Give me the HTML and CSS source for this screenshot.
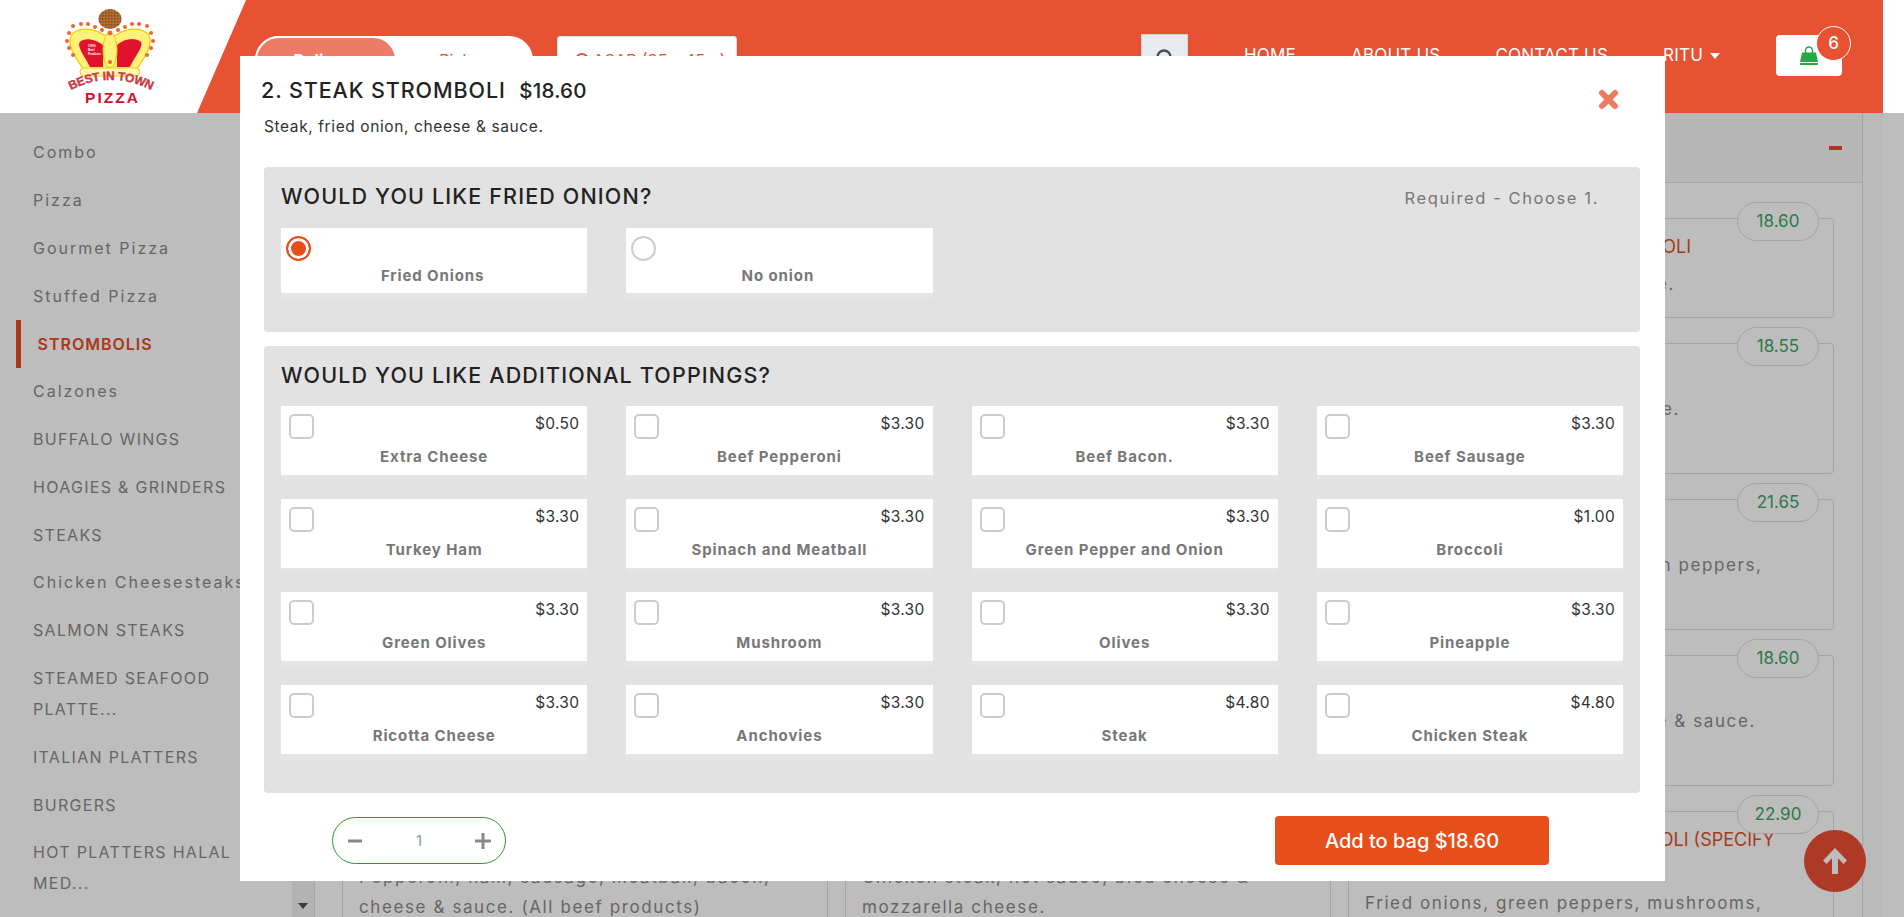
FILE: index.html
```html
<!DOCTYPE html>
<html lang="en">
<head>
<meta charset="UTF-8" />
<title>Best In Town Pizza</title>
<link rel="stylesheet" href="styles.css">
</head>
<body>
    <header class="topbar">
        <a class="logo">
            <svg width="246" height="113" viewBox="0 0 246 113">
                <defs>
                    <pattern id="crumb" width="3" height="3" patternUnits="userSpaceOnUse">
                        <rect width="3" height="3" fill="#a9642c"/>
                        <circle cx="0.8" cy="0.8" r="0.6" fill="#6f3a14"/>
                        <circle cx="2.2" cy="2.2" r="0.5" fill="#d99a55"/>
                    </pattern>
                    <path id="arc" d="M71 90 Q110 70 151 90"/>
                </defs>
                <ellipse cx="110" cy="19" rx="11.500" ry="10" fill="url(#crumb)"/>
                <path d="M84 70 C74 56 67 44 71 36 C76 27 92 27 104 35 L116 35 C128 27 144 27 149 36 C153 44 146 56 136 70 Z" fill="#fff27a" stroke="#f2c900" stroke-width="1.200"/>
                <path d="M90 67 C86 58 76 46 80 42 C84 37 96 39 103 45 L103 67 Z" fill="#e2122f"/>
                <path d="M130 67 C134 58 144 46 141 42 C136 37 124 38 117 45 L117 67 Z" fill="#e2122f"/>
                <ellipse cx="110" cy="50" rx="7" ry="18" fill="#fff27a" stroke="#f2c900" stroke-width="1"/>
                <rect x="80" y="68" width="60" height="8" rx="4" fill="#fff7b0" stroke="#eccb20"/>
                <g fill="#f0642e">
                    <circle cx="110" cy="33" r="2.400"/><circle cx="110" cy="62" r="2"/>
                    <circle cx="102" cy="30" r="2"/><circle cx="118" cy="30" r="2"/>
                    <circle cx="95" cy="27" r="2"/><circle cx="125" cy="27" r="2"/>
                    <circle cx="88" cy="24" r="2"/><circle cx="132" cy="24" r="2"/>
                    <circle cx="81" cy="24" r="2"/><circle cx="139" cy="24" r="2"/>
                    <circle cx="73" cy="26" r="2"/><circle cx="147" cy="26" r="2"/>
                    <circle cx="69" cy="33" r="2"/><circle cx="151" cy="33" r="2"/>
                    <circle cx="67" cy="41" r="2"/><circle cx="153" cy="41" r="2"/>
                    <circle cx="69" cy="48" r="2"/><circle cx="151" cy="48" r="2"/>
                    <circle cx="73" cy="55" r="2"/><circle cx="147" cy="55" r="2"/>
                </g>
                <text class="logo-tiny" x="88" y="47">100%</text>
                <text class="logo-tiny" x="88" y="51">Beef</text>
                <text class="logo-tiny" x="88" y="55">Products</text>
                <text class="logo-arc"><textPath href="#arc" startOffset="50%" text-anchor="middle">BEST IN TOWN</textPath></text>
                <text class="logo-pizza" x="111.500" y="103" text-anchor="middle" textLength="53">PIZZA</text>
            </svg>
        </a>

        <div class="order-toggle">
            <span class="order-toggle-on">Delivery</span>
            <span class="order-toggle-off">Pickup</span>
        </div>
        <div class="order-time">
            <svg width="14" height="14" viewBox="0 0 14 14"><circle cx="7" cy="7" r="6" fill="none" stroke="#e65232" stroke-width="2"/></svg>
            ASAP (35 - 45m)
        </div>

        <div class="search-box">
            <svg width="20" height="20" viewBox="0 0 20 20"><circle cx="9" cy="9" r="6.500" fill="none" stroke="#495057" stroke-width="2.400"/><path d="M14 14l5 5" stroke="#495057" stroke-width="2.400"/></svg>
        </div>

        <nav class="main-nav">
            <a>HOME</a>
            <a>ABOUT US</a>
            <a>CONTACT US</a>
            <a class="user-link">RITU <i class="caret"></i></a>
        </nav>

        <a class="cart">
            <svg width="18" height="19" viewBox="0 0 18 19">
                <path d="M5.500 7V4.500a3.500 3.500 0 0 1 7 0V7" fill="none" stroke="#28a745" stroke-width="1.500"/>
                <path d="M2 6.500h14l2 9.500H0z" fill="#28a745"/>
                <rect y="17" width="18" height="2" fill="#28a745"/>
            </svg>
            <span class="cart-count">6</span>
        </a>
    </header>

    <main class="menu-page">
        <aside class="categories">
            <a class="mixed">Combo</a>
            <a class="mixed">Pizza</a>
            <a class="mixed">Gourmet Pizza</a>
            <a class="mixed">Stuffed Pizza</a>
            <a class="active">STROMBOLIS</a>
            <a class="mixed">Calzones</a>
            <a>BUFFALO WINGS</a>
            <a>HOAGIES &amp; GRINDERS</a>
            <a>STEAKS</a>
            <a class="mixed">Chicken Cheesesteaks</a>
            <a>SALMON STEAKS</a>
            <a>STEAMED SEAFOOD<br>PLATTE...</a>
            <a>ITALIAN PLATTERS</a>
            <a>BURGERS</a>
            <a>HOT PLATTERS HALAL<br>MED...</a>
        </aside>
        <div class="categories-scroll"><i class="scroll-down"></i></div>

        <section class="menu-panel">
            <div class="menu-panel-head">
                <h2>STROMBOLIS</h2>
                <i class="collapse-icon"></i>
            </div>
            <div class="menu-grid">
                <article class="item"><h3>1. CHEESE STROMBOLI</h3><p>Cheese &amp; sauce.</p><span class="item-price">18.60</span></article>
                <article class="item"><h3>2. STEAK STROMBOLI</h3><p>Steak, fried onion, cheese &amp; sauce.</p><span class="item-price">18.60</span></article>
                <article class="item"><h3>3. PEPPERONI, SAUSAGE STROMBOLI</h3><p>Pepperoni, sausage and cheese.</p><span class="item-price">18.60</span></article>

                <article class="item"><h3>4. HAM STROMBOLI</h3><p>Ham, cheese &amp; sauce.</p><span class="item-price">18.55</span></article>
                <article class="item"><h3>5. MEATBALL STROMBOLI</h3><p>Meatball, cheese &amp; sauce.</p><span class="item-price">18.55</span></article>
                <article class="item"><h3>6. SAUSAGE STROMBOLI</h3><p>Sausage, onion, cheese &amp; sauce.</p><span class="item-price">18.55</span></article>

                <article class="item"><h3>7. VEGGIE STROMBOLI</h3><p>Spinach, tomato, cheese &amp; sauce.</p><span class="item-price">21.65</span></article>
                <article class="item"><h3>8. TURKEY STROMBOLI</h3><p>Turkey ham, cheese &amp; sauce.</p><span class="item-price">21.65</span></article>
                <article class="item"><h3>9. SUPREME STROMBOLI</h3><p>Fried onions, mushrooms, green peppers, pineapple.</p><span class="item-price">21.65</span></article>

                <article class="item"><h3>10. CHICKEN STROMBOLI</h3><p>Chicken, cheese &amp; sauce.</p><span class="item-price">18.60</span></article>
                <article class="item"><h3>11. BUFFALO STROMBOLI</h3><p>Chicken, hot sauce, cheese.</p><span class="item-price">18.60</span></article>
                <article class="item"><h3>12. BEEF STROMBOLI</h3><p>Beef pepperoni, onions, cheese &amp; sauce.</p><span class="item-price">18.60</span></article>

                <article class="item"><h3>13. BEST IN TOWN STROMBOLI</h3><p>Pepperoni, ham, sausage, meatball, bacon, cheese &amp; sauce. (All beef products)</p><span class="item-price">22.90</span></article>
                <article class="item"><h3>14. BUFFALO CHICKEN STROMBOLI</h3><p>Chicken steak, hot sauce, bleu cheese &amp; mozzarella cheese.</p><span class="item-price">22.90</span></article>
                <article class="item"><h3>15. VEGETABLE DELIGHT STROMBOLI (SPECIFY TOPPINGS)</h3><p>Fried onions, green peppers, mushrooms,</p><span class="item-price">22.90</span></article>
            </div>
        </section>
        <div class="page-scroll"></div>
    </main>

    <a class="back-top">
        <svg width="26" height="28" viewBox="0 0 26 28"><path d="M13 1L25 13.500 21.500 17 16 11.200V27h-6V11.200L4.500 17 1 13.500z" fill="#fff"/></svg>
    </a>

    <div class="backdrop"></div>

    <div class="modal">
        <div class="modal-head">
            <div>
                <h1>2. STEAK STROMBOLI <span>$18.60</span></h1>
                <p>Steak, fried onion, cheese &amp; sauce.</p>
            </div>
            <svg class="modal-close" width="21" height="21" viewBox="0 0 21 21"><path d="M4 4l13 13M17 4L4 17" stroke="#ee7b5c" stroke-width="6" stroke-linecap="round"/></svg>
        </div>

        <section class="group group-radio">
            <div class="group-head">
                <h4>WOULD YOU LIKE FRIED ONION?</h4>
                <span>Required - Choose 1.</span>
            </div>
            <div class="choices">
                <label class="choice"><div class="choice-top"><i class="radio checked"></i></div><b>Fried Onions</b></label>
                <label class="choice"><div class="choice-top"><i class="radio"></i></div><b>No onion</b></label>
            </div>
        </section>

        <section class="group group-check">
            <div class="group-head">
                <h4>WOULD YOU LIKE ADDITIONAL TOPPINGS?</h4>
            </div>
            <div class="choices">
                <label class="choice"><div class="choice-top"><i class="check"></i><em>$0.50</em></div><b>Extra Cheese</b></label>
                <label class="choice"><div class="choice-top"><i class="check"></i><em>$3.30</em></div><b>Beef Pepperoni</b></label>
                <label class="choice"><div class="choice-top"><i class="check"></i><em>$3.30</em></div><b>Beef Bacon.</b></label>
                <label class="choice"><div class="choice-top"><i class="check"></i><em>$3.30</em></div><b>Beef Sausage</b></label>
                <label class="choice"><div class="choice-top"><i class="check"></i><em>$3.30</em></div><b>Turkey Ham</b></label>
                <label class="choice"><div class="choice-top"><i class="check"></i><em>$3.30</em></div><b>Spinach and Meatball</b></label>
                <label class="choice"><div class="choice-top"><i class="check"></i><em>$3.30</em></div><b>Green Pepper and Onion</b></label>
                <label class="choice"><div class="choice-top"><i class="check"></i><em>$1.00</em></div><b>Broccoli</b></label>
                <label class="choice"><div class="choice-top"><i class="check"></i><em>$3.30</em></div><b>Green Olives</b></label>
                <label class="choice"><div class="choice-top"><i class="check"></i><em>$3.30</em></div><b>Mushroom</b></label>
                <label class="choice"><div class="choice-top"><i class="check"></i><em>$3.30</em></div><b>Olives</b></label>
                <label class="choice"><div class="choice-top"><i class="check"></i><em>$3.30</em></div><b>Pineapple</b></label>
                <label class="choice"><div class="choice-top"><i class="check"></i><em>$3.30</em></div><b>Ricotta Cheese</b></label>
                <label class="choice"><div class="choice-top"><i class="check"></i><em>$3.30</em></div><b>Anchovies</b></label>
                <label class="choice"><div class="choice-top"><i class="check"></i><em>$4.80</em></div><b>Steak</b></label>
                <label class="choice"><div class="choice-top"><i class="check"></i><em>$4.80</em></div><b>Chicken Steak</b></label>
            </div>
        </section>

        <div class="modal-foot">
            <div class="qty">
                <svg width="16" height="16" viewBox="0 0 16 16"><rect x="1" y="6.500" width="14" height="3" fill="#888"/></svg>
                <span>1</span>
                <svg width="16" height="16" viewBox="0 0 16 16"><path d="M0 6.500h6.500V0h3v6.500H16v3H9.500V16h-3V9.500H0z" fill="#888"/></svg>
            </div>
            <button class="add-bag">Add to bag $18.60</button>
        </div>
    </div>
</body>
</html>
```

FILE: styles.css
```css
* {
    margin:0px;
    padding:0px;
    box-sizing:border-box;
}

html, body {
    height:917px;
    overflow:hidden;
}

body {
    position:relative;
    font-family:Inter, 'Open Sans', sans-serif;
    color:#777;
    background-color:#fff;
}

/* top bar */
.topbar {
    display:flex;
    align-items:flex-start;
    width:1883px;
    height:113px;
    padding-right:41px;
    background-color:#e65232;
}

.logo {
    display:block;
    width:246px;
    height:113px;
    background-color:#fff;
    clip-path:polygon(0 0, 100% 0, 197px 100%, 0 100%);
}

.logo-tiny {
    font-family:'Liberation Sans', sans-serif;
    font-size:3px;
    font-weight:bold;
    fill:#fff;
}

.logo-arc {
    font-family:'Liberation Sans', sans-serif;
    font-size:12px;
    font-weight:bold;
    fill:#e8394a;
    stroke:#7a2a30;
    stroke-width:0.3px;
    letter-spacing:-0.3px;
}

.logo-pizza {
    font-family:'Liberation Sans', sans-serif;
    font-size:15.5px;
    font-weight:bold;
    fill:#d3102e;
}

.order-toggle {
    display:flex;
    width:278px;
    height:48px;
    margin:36px 0px 0px 9px;
    border-radius:24px;
    background-color:#fff;
    font-size:16px;
    line-height:44px;
    text-align:center;
}

.order-toggle-on {
    width:142px;
    border:2px solid #fff;
    border-radius:24px;
    font-weight:700;
    color:#fff;
    background-color:#ee7b66;
}

.order-toggle-off {
    flex:1;
    color:#e65232;
    line-height:48px;
    text-align:center;
}

.order-time {
    display:flex;
    align-items:center;
    gap:4px;
    width:180px;
    height:48px;
    margin:36px 0px 0px 24px;
    padding-left:17px;
    border:1px solid #ddd;
    border-radius:3px;
    font-size:16.5px;
    white-space:nowrap;
    color:#e65232;
    background-color:#fff;
}

.search-box {
    display:flex;
    align-items:center;
    justify-content:center;
    width:47px;
    height:48px;
    margin:34px 0px 0px auto;
    border:1px solid #ced4da;
    background-color:#e9ecef;
}

.main-nav {
    display:flex;
    gap:55px;
    margin:40px 0px 0px 56px;
    font-size:17px;
    letter-spacing:0.2px;
    line-height:30px;
    color:#fff;
}

.caret {
    display:inline-block;
    margin-left:2px;
    border-top:6px solid #fff;
    border-left:5px solid rgba(0, 0, 0, 0);
    border-right:5px solid rgba(0, 0, 0, 0);
    vertical-align:2px;
}

.cart {
    position:relative;
    display:flex;
    align-items:center;
    justify-content:center;
    width:66px;
    height:41px;
    margin:35px 0px 0px 56px;
    border-radius:4px;
    background-color:#fff;
}

.cart-count {
    position:absolute;
    top:-9px;
    right:-9px;
    width:35px;
    height:35px;
    border:1px solid #fff;
    border-radius:50%;
    font-size:17px;
    font-weight:500;
    line-height:33px;
    text-align:center;
    color:#fff;
    background-color:#e65232;
}

/* page behind the dialog */
.menu-page {
    display:flex;
    width:1883px;
    height:804px;
    overflow:hidden;
}

.categories {
    width:292px;
    padding-top:16px;
    font-size:16px;
    letter-spacing:1.3px;
    color:#8a8a8a;
}

.categories a {
    display:block;
    padding:8.4px 0px 8.4px 33px;
    line-height:31px;
    white-space:nowrap;
}

.categories a.mixed {
    letter-spacing:2px;
}

.categories a.active {
    margin-left:16px;
    padding-left:16.5px;
    border-left:5px solid #e64e26;
    font-weight:600;
    letter-spacing:1px;
    color:#e64e26;
}

.categories-scroll {
    position:relative;
    width:22px;
    background-color:#f2f2f2;
}

.scroll-down {
    position:absolute;
    bottom:8px;
    left:6px;
    border-top:6px solid #505050;
    border-left:5px solid rgba(0, 0, 0, 0);
    border-right:5px solid rgba(0, 0, 0, 0);
}

.menu-panel {
    flex:1;
    border-left:1px solid #dfdfdf;
    border-right:1px solid #dfdfdf;
}

.menu-panel-head {
    display:flex;
    align-items:center;
    justify-content:space-between;
    height:70px;
    padding:0px 20px 0px 28px;
    border-bottom:1px solid #dfdfdf;
    background-color:#f7f7f7;
}

.menu-panel-head h2 {
    font-size:18px;
    font-weight:500;
}

.collapse-icon {
    width:13px;
    height:4px;
    background-color:#e64e26;
}

.menu-grid {
    display:grid;
    grid-template-columns:repeat(3, 486px);
    grid-template-rows:100px repeat(4, 131px);
    gap:25px 17px;
    padding:35px 0px 0px 27px;
}

.item {
    position:relative;
    padding:12px 16px;
    border:1px solid #ddd;
    border-radius:4px;
}

.item h3 {
    min-height:38px;
    font-size:18px;
    font-weight:400;
    line-height:32px;
    color:#e64e26;
}

.item p {
    max-width:425px;
    font-size:17px;
    letter-spacing:1.6px;
    line-height:30px;
    color:#8a8a8a;
}

.item-price {
    position:absolute;
    top:-17px;
    right:14px;
    width:82px;
    height:39px;
    border:1px solid #ddd;
    border-radius:20px;
    font-size:17px;
    line-height:37px;
    text-align:center;
    color:#3aa564;
    background-color:#fff;
}

.page-scroll {
    width:20px;
    background-color:#fafafa;
}

.back-top {
    position:absolute;
    left:1804px;
    top:830px;
    display:flex;
    align-items:center;
    justify-content:center;
    width:62px;
    height:62px;
    border-radius:50%;
    background-color:#eb4e31;
}

.backdrop {
    position:absolute;
    top:113px;
    right:0px;
    bottom:0px;
    left:0px;
    background-color:rgba(0, 0, 0, 0.26);
}

.back-top svg {
    display:block;
}

/* dialog */
.modal {
    position:absolute;
    top:56px;
    left:240px;
    width:1425px;
    height:825px;
    padding:0px 25px 0px 24px;
    background-color:#fff;
}

.modal-head {
    display:flex;
    justify-content:space-between;
    height:111px;
    padding-top:19px;
}

.modal-head h1 {
    margin-left:-3px;
    font-size:21.5px;
    font-weight:500;
    letter-spacing:0.9px;
    line-height:30px;
    color:#222;
}

.modal-head h1 span {
    margin-left:7px;
    font-size:20.5px;
    letter-spacing:0.2px;
}

.modal-head p {
    margin-top:11px;
    font-size:15.5px;
    letter-spacing:0.6px;
    line-height:20px;
    color:#333;
}

.modal-close {
    margin:14px 21px 0px 0px;
}

.group {
    margin-bottom:14px;
    padding:14px 17px 0px;
    border-radius:4px;
    background-color:#e2e2e2;
}

.group-radio {
    height:165px;
}

.group-check {
    height:447px;
}

.group-head {
    display:flex;
    justify-content:space-between;
    align-items:flex-start;
    margin-bottom:17px;
    padding-right:24px;
    line-height:30px;
}

.group-check .group-head {
    margin-bottom:16px;
}

.group-head h4 {
    font-size:21.5px;
    font-weight:500;
    letter-spacing:1.15px;
    color:#222;
}

.group-head span {
    margin-top:4px;
    font-size:16.5px;
    letter-spacing:1.6px;
    line-height:26px;
    color:#777;
}

.choices {
    display:grid;
    grid-template-columns:repeat(4, 1fr);
    gap:24px 39px;
}

.choice {
    display:block;
    height:69px;
    padding:8px 8px 0px 8px;
    background-color:#fff;
    box-shadow:0px 6px 0px #e5e5e6;
}

.choice-top {
    display:flex;
    justify-content:space-between;
    height:25px;
}

.choice em {
    font-size:15.5px;
    font-style:normal;
    letter-spacing:0.3px;
    line-height:20px;
    color:#333;
}

.choice b {
    display:block;
    margin-top:8px;
    font-size:15px;
    font-weight:700;
    letter-spacing:0.9px;
    line-height:20px;
    text-align:center;
    color:#777;
}

.group-radio .choice {
    height:65px;
    padding-left:5px;
}

.group-radio .choice b {
    margin-top:5px;
}

.check {
    width:25px;
    height:25px;
    border:2px solid #ccc;
    border-radius:5px;
}

.radio {
    width:25px;
    height:25px;
    border:2px solid #ccc;
    border-radius:50%;
    background-color:#fff;
}

.radio.checked {
    border-color:#e64e1a;
    background-color:#e64e1a;
    box-shadow:inset 0px 0px 0px 3px #fff;
}

.modal-foot {
    display:flex;
    justify-content:space-between;
    align-items:center;
    margin-top:23px;
    padding:0px 91px 0px 68px;
}

.qty {
    display:flex;
    align-items:center;
    justify-content:space-between;
    width:174px;
    height:47px;
    padding:0px 14px;
    border:1px solid #2b9a2b;
    border-radius:24px;
}

.qty span {
    font-size:15px;
    color:#7f9f9a;
}

.add-bag {
    width:274px;
    height:49px;
    border:none;
    border-radius:4px;
    font-family:Inter, 'Open Sans', sans-serif;
    font-size:20px;
    font-weight:500;
    color:#fff;
    background-color:#e64e1a;
}
```
